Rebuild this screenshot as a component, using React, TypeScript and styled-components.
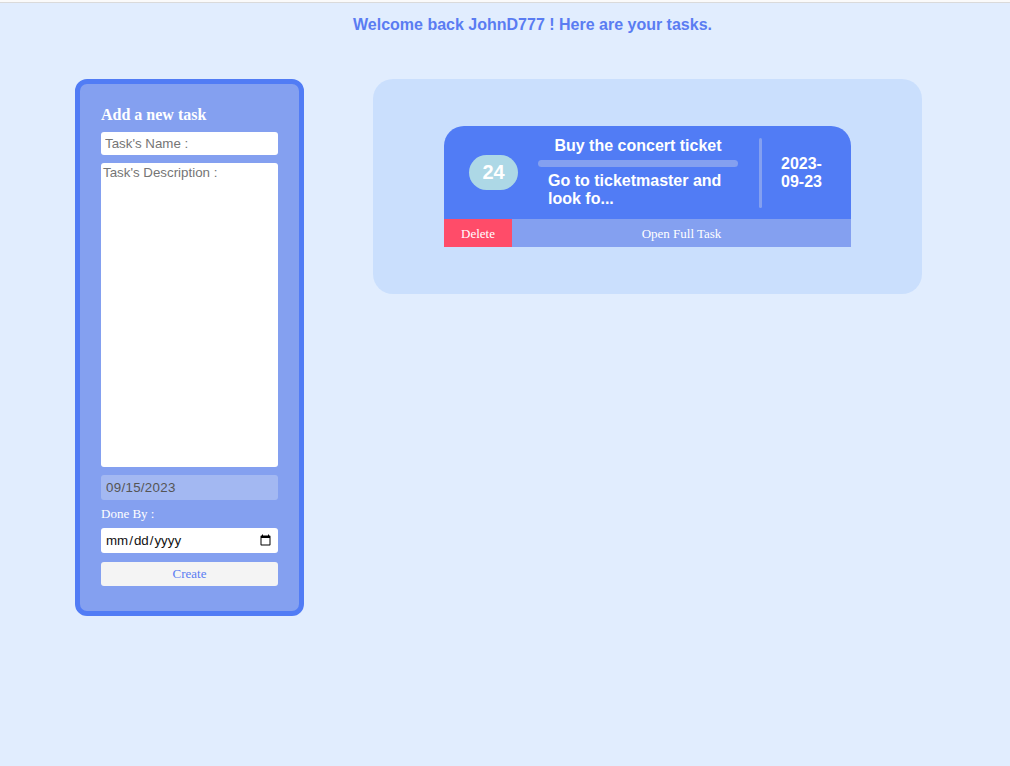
import React from "react";
import styled, { createGlobalStyle } from "styled-components";

const Global = createGlobalStyle`
  html, body { margin: 0; padding: 0; background: #fafafa; }
  body { font-family: "Liberation Serif", "Times New Roman", serif; }
  #root { min-height: 766px; }
`;

const Page = styled.div`
  margin-top: 2px;
  border-top: 1px solid #dadada;
  background: #e1edfe;
  min-height: 763px;
`;

const Header = styled.h1`
  margin: 0;
  padding: 13px 0 0 55px;
  text-align: center;
  font-family: "Liberation Sans", Arial, sans-serif;
  font-size: 16px;
  line-height: 18px;
  font-weight: 700;
  color: #5a7cf2;
`;

const Main = styled.div`
  display: flex;
  align-items: flex-start;
  gap: 69px;
  padding-left: 75px;
  margin-top: 45px;
`;

const FormPanel = styled.form`
  box-sizing: border-box;
  width: 229px;
  border: 5px solid #517cf5;
  border-radius: 12px;
  background: #84a0f0;
  padding: 21px 21px 25px;
  display: flex;
  flex-direction: column;
`;

const FormTitle = styled.h3`
  margin: 0 0 8px;
  font-family: "Liberation Serif", "Times New Roman", serif;
  font-size: 16px;
  line-height: 19px;
  font-weight: 700;
  color: #ffffff;
`;

const TextInput = styled.input<{ $h?: number; $mb?: number }>`
  box-sizing: border-box;
  width: 100%;
  height: ${(p) => p.$h ?? 23}px;
  border: none;
  border-radius: 3px;
  padding: 0 4px;
  margin: 0 0 ${(p) => p.$mb ?? 8}px;
  font-family: "Liberation Sans", Arial, sans-serif;
  font-size: 13.33px;
  color: #222;
  background: #ffffff;
  outline: none;
  &::placeholder { color: #757575; }
  &:disabled {
    background: #a3b8f2;
    color: #555;
    padding: 0 5px;
    letter-spacing: 0.3px;
  }
`;

const TextArea = styled.textarea`
  box-sizing: border-box;
  width: 100%;
  height: 304px;
  border: none;
  border-radius: 3px;
  padding: 2px 2px;
  margin: 0 0 8px;
  resize: none;
  font-family: "Liberation Sans", Arial, sans-serif;
  font-size: 13.33px;
  line-height: 16px;
  background: #ffffff;
  outline: none;
  &::placeholder { color: #757575; }
`;

const Label = styled.label`
  font-family: "Liberation Serif", "Times New Roman", serif;
  font-size: 13px;
  line-height: 15px;
  color: #ffffff;
  margin: 0 0 7px;
`;

const DateInput = styled.input`
  box-sizing: border-box;
  width: 100%;
  height: 25px;
  border: none;
  border-radius: 3px;
  padding: 0 4px;
  margin: 0 0 9px;
  font-family: "Liberation Sans", Arial, sans-serif;
  font-size: 13.33px;
  background: #ffffff;
  color: #111;
  outline: none;
`;

const CreateButton = styled.button`
  box-sizing: border-box;
  width: 100%;
  height: 24px;
  border: none;
  border-radius: 3px;
  background: #f4f4f4;
  color: #5a7cf2;
  font-family: "Liberation Serif", "Times New Roman", serif;
  font-size: 13px;
  cursor: pointer;
`;

const TasksPanel = styled.section`
  box-sizing: border-box;
  width: 549px;
  min-height: 215px;
  border-radius: 20px;
  background: #cadffd;
  padding: 47px 0;
  display: flex;
  flex-direction: column;
  align-items: center;
`;

const Card = styled.article`
  width: 407px;
  display: flex;
  flex-direction: column;
`;

const CardBody = styled.div`
  box-sizing: border-box;
  height: 93px;
  background: #517cf5;
  border-radius: 20px 20px 0 0;
  display: flex;
  align-items: center;
  padding: 0 25px;
  color: #ffffff;
  font-family: "Liberation Sans", Arial, sans-serif;
  font-weight: 700;
`;

const Badge = styled.div`
  flex: none;
  width: 49px;
  height: 35px;
  border-radius: 18px;
  background: #add8e6;
  display: flex;
  align-items: center;
  justify-content: center;
  font-size: 20px;
`;

const Middle = styled.div`
  flex: none;
  width: 200px;
  margin-left: 20px;
  display: flex;
  flex-direction: column;
`;

const TaskTitle = styled.div`
  text-align: center;
  font-size: 16px;
  line-height: 18px;
`;

const Bar = styled.div`
  height: 7px;
  border-radius: 4px;
  background: #84a0f0;
  margin: 5px 0 5px;
`;

const TaskDesc = styled.div`
  padding: 0 10px;
  font-size: 16px;
  line-height: 18px;
`;

const Divider = styled.div`
  flex: none;
  width: 3px;
  height: 70px;
  border-radius: 2px;
  background: #84a0f0;
  margin-left: 21px;
`;

const DueDate = styled.div`
  width: 46px;
  margin-left: 19px;
  font-size: 16px;
  line-height: 18px;
`;

const Actions = styled.div`
  display: flex;
  height: 28px;
`;

const ActionButton = styled.button<{ $danger?: boolean }>`
  border: none;
  margin: 0;
  padding: 2px 0 0;
  height: 28px;
  flex: ${(p) => (p.$danger ? "0 0 68px" : "1")};
  background: ${(p) => (p.$danger ? "#ff4c69" : "#84a0f0")};
  color: #ffffff;
  font-family: "Liberation Serif", "Times New Roman", serif;
  font-size: 13px;
  cursor: pointer;
`;

export default function App() {
  return (
    <>
      <Global />
      <Page>
        <Header>Welcome back JohnD777 ! Here are your tasks.</Header>
        <Main>
          <FormPanel onSubmit={(e) => e.preventDefault()}>
            <FormTitle>Add a new task</FormTitle>
            <TextInput type="text" placeholder="Task's Name :" />
            <TextArea placeholder="Task's Description :" />
            <TextInput type="text" value="09/15/2023" disabled readOnly $h={25} $mb={6} />
            <Label>Done By :</Label>
            <DateInput type="date" />
            <CreateButton type="submit">Create</CreateButton>
          </FormPanel>
          <TasksPanel>
            <Card>
              <CardBody>
                <Badge>24</Badge>
                <Middle>
                  <TaskTitle>Buy the concert ticket</TaskTitle>
                  <Bar />
                  <TaskDesc>Go to ticketmaster and look fo...</TaskDesc>
                </Middle>
                <Divider />
                <DueDate>2023-09-23</DueDate>
              </CardBody>
              <Actions>
                <ActionButton $danger>Delete</ActionButton>
                <ActionButton>Open Full Task</ActionButton>
              </Actions>
            </Card>
          </TasksPanel>
        </Main>
      </Page>
    </>
  );
}
